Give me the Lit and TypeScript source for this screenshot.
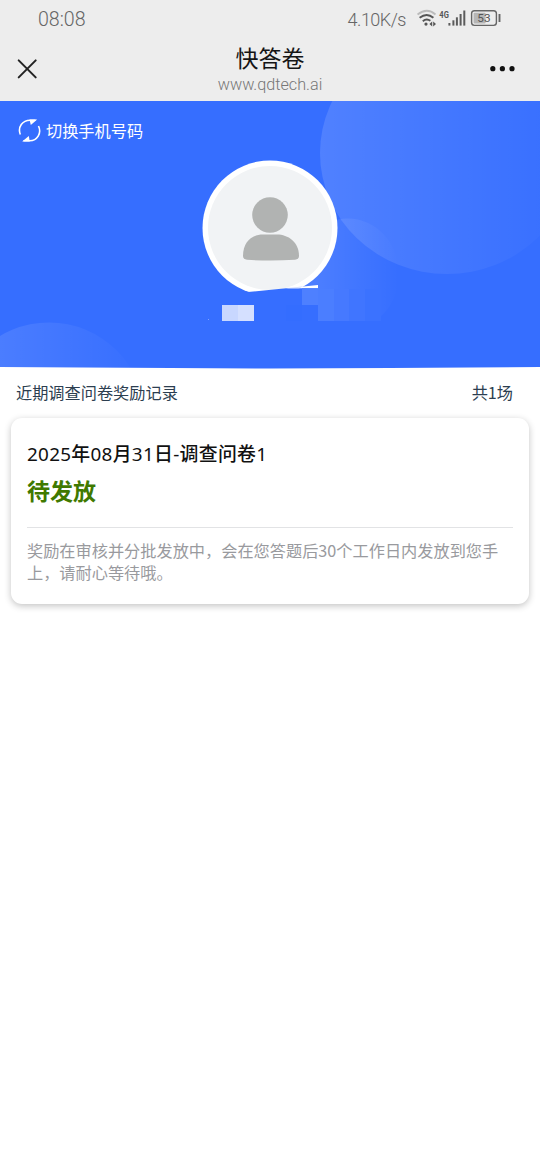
import { LitElement, html, css, svg } from "lit";
import { customElement, property } from "lit/decorators.js";

@customElement("status-bar")
class StatusBar extends LitElement {
  static styles = css`
    :host { display: flex; justify-content: space-between; height: 38px; padding: 0 39px 0 38px; color: #666; font: 300 19.6px/38px Roboto, sans-serif; }
    .clock { padding-top: 1px; }
    .right { display: flex; }
    .speed { font-size: 18px; letter-spacing: -.5px; margin-right: 11px; padding-top: 1px; }
    svg { display: block; }
  `;
  render() {
    const bars = [[448.5, 23], [452.5, 20.3], [456, 17.3], [459.7, 14], [463.4, 10.5]];
    return html`
      <span class="clock">08:08</span>
      <div class="right">
        <span class="speed">4.10K/s</span>
        <svg width="84" height="38" viewBox="417 0 84 38" fill="none">
          <path d="M417.5 14.5Q427 7 435.5 14.5" stroke="#bbb" stroke-width="1.8"/>
          <path d="M419.6 17.8Q426.8 12.2 433.4 17.8M422.8 21.2Q426.5 18 430.4 20.8" stroke="#555" stroke-width="1.9"/>
          <circle cx="426" cy="24.1" r="1.6" fill="#555"/>
          <path d="M429.4 24l2.8-2.5v5zM436 24l-2.8-2.5v5z" fill="#555"/>
          <text x="439.3" y="17.5" font-family="Roboto" font-size="9.5" font-weight="700" textLength="9.5" lengthAdjust="spacingAndGlyphs" fill="#555">4G</text>
          ${bars.map(([x, y]) => svg`<path d="M${x + .9} ${y}V25.6" stroke="#5c5c5c" stroke-width="2"/>`)}
          <rect x="471.6" y="10.8" width="24.8" height="14.6" rx="2.8" stroke="#666" stroke-width="1.4"/>
          <rect x="473.6" y="12.7" width="12" height="10.8" rx="1" fill="#b6b6b6"/>
          <path d="M499.5 14v8" stroke="#666" stroke-width="1.9"/>
          <text x="477.3" y="22.4" font-family="Roboto" font-size="11.8" font-weight="400" fill="#555">53</text>
        </svg>
      </div>`;
  }
}

@customElement("nav-bar")
class NavBar extends LitElement {
  static styles = css`
    :host { display: grid; grid-template-columns: 60px 1fr 60px; height: 63px; }
    .mid { display: flex; flex-direction: column; align-items: center; }
    .title { font: 400 23px/30px "Noto Sans CJK SC", sans-serif; color: #151515; margin-top: 4px; }
    .url { font: 300 16.2px/20px Roboto, sans-serif; color: #777; margin-top: 3px; }
    svg { display: block; }
  `;
  render() {
    return html`
      <svg width="60" height="63" viewBox="0 38 60 63"><path d="M18.7 60.4l17 17M35.7 60.4l-17 17" stroke="#222" stroke-width="2" stroke-linecap="round"/></svg>
      <div class="mid"><div class="title">快答卷</div><div class="url">www.qdtech.ai</div></div>
      <svg width="60" height="63" viewBox="480 38 60 63" fill="#111"><circle cx="492.8" cy="68.7" r="2.6"/><circle cx="502.4" cy="68.7" r="2.6"/><circle cx="512" cy="68.7" r="2.6"/></svg>`;
  }
}

@customElement("profile-hero")
class ProfileHero extends LitElement {
  static styles = css`
    :host { display: grid; height: 268px; }
    .art, .switch { grid-area: 1 / 1; }
    .art { display: block; }
    .switch { display: flex; align-items: center; align-self: start; gap: 5px; padding: 17px 0 0 18px; height: 25px; color: #fff; z-index: 1; font: 400 16.2px/24px "Noto Sans CJK SC", sans-serif; }
    .label { margin-top: -2px; }
  `;
  render() {
    return html`
      <svg class="art" width="540" height="268" viewBox="0 101 540 268">
        <defs>
          <linearGradient id="big"><stop offset="0" stop-color="#fff" stop-opacity=".13"/><stop offset="1" stop-color="#fff" stop-opacity="0"/></linearGradient>
          <linearGradient id="small"><stop offset=".2" stop-color="#fff" stop-opacity=".11"/><stop offset="1" stop-color="#fff" stop-opacity="0"/></linearGradient>
          <clipPath id="edge"><path d="M0 101H540V367Q405 368 270 368.6Q135 368 0 367Z"/></clipPath>
          <clipPath id="above"><rect x="290" y="210" width="120" height="111"/></clipPath>
        </defs>
        <g clip-path="url(#edge)">
          <rect y="101" width="540" height="268" fill="#366eff"/>
          <ellipse cx="447" cy="153" rx="127" ry="121" fill="url(#big)"/>
          <ellipse cx="348" cy="274" rx="51" ry="55.5" fill="url(#small)" clip-path="url(#above)"/>
          <circle cx="49" cy="418.5" r="96" fill="url(#small)"/>
          <circle cx="270" cy="228" r="67.5" fill="#fff"/>
          <circle cx="270" cy="228" r="62" fill="#f1f3f5"/>
          <circle cx="270" cy="215" r="17.8" fill="#b1b3b2"/>
          <path d="M243 256C243 242 252 234.5 263 234.5H277C288 234.5 299 242 299 256Q299 259.2 295 259.8Q270 261.3 247 259.8Q243 259.2 243 256Z" fill="#b1b3b2"/>
          <path d="M202 292H248L286 288.2H318V321H202Z" fill="#366eff"/>
          <path d="M286 288.3L318 285V288.3Z" fill="#fff"/>
          <path d="M286 288.1L303 286.5L300 287.6Z" fill="#b9cbff"/>
          <rect x="302" y="288.3" width="16" height="16.7" fill="#4e80ff"/>
          <rect x="318" y="289" width="16" height="32" fill="#4b7eff"/>
          <rect x="334" y="289" width="15" height="32" fill="#4679ff"/>
          <rect x="349" y="289" width="16" height="32" fill="#4075ff"/>
          <rect x="365" y="289" width="16" height="32" fill="#3b72ff"/>
          <rect x="286" y="305" width="16" height="16" fill="#346dff"/>
          <rect x="222" y="305" width="16" height="16" fill="#c8d7ff"/>
          <rect x="238" y="305" width="16" height="16" fill="#d5e0ff"/>
          <rect x="208" y="319" width="1" height="1" fill="#7ea2ff"/>
        </g>
      </svg>
      <div class="switch">
        <svg width="23" height="25" viewBox="18 118 23 25" fill="none" stroke="#fff" stroke-width="1.6">
          <path d="M20.3 134.5C17.6 127.5 22 119.8 31 120.2H35.5"/>
          <path d="M38.5 126C41.8 133 37.5 141.2 29 140.8H23.5"/>
          <path d="M29.5 119.4H37.2L30.8 125ZM29.8 141.6H22.2L28.8 136Z" fill="#fff" stroke="none"/>
        </svg>
        <span class="label">切换手机号码</span>
      </div>`;
  }
}

@customElement("record-card")
class RecordCard extends LitElement {
  @property() name = "";
  @property() status = "";
  @property() note = "";
  static styles = css`
    :host { display: block; box-sizing: border-box; height: 186px; margin: 0 11px; padding: 22px 16px 0; background: #fff; border-radius: 11px; box-shadow: 0 2px 7px rgba(0,0,0,.24); font-family: "Noto Sans CJK SC", sans-serif; }
    .name { font: 500 18.9px/28px "Noto Sans", "Noto Sans CJK SC", sans-serif; font-weight: 450; letter-spacing: .28px; color: #111; height: 28px; }
    .status { font-size: 23px; line-height: 34px; font-weight: 700; color: #3f7900; margin-top: 5px; height: 34px; }
    .note { border-top: 1px solid #e2e3e5; margin-top: 20px; padding-top: 11px; font-size: 16.22px; line-height: 22px; color: #999a9e; }
  `;
  render() {
    return html`<div class="name">${this.name}</div><div class="status">${this.status}</div><div class="note">${this.note}</div>`;
  }
}

@customElement("app-root")
class AppRoot extends LitElement {
  static styles = css`
    :host { display: block; min-height: 1170px; background: #fff; }
    .top { height: 101px; background: #ededed; }
    .heading { display: flex; justify-content: space-between; height: 49px; padding: 0 27px 0 16px; color: #2c3e50; font: 400 16.2px/46px "Noto Sans CJK SC", sans-serif; }
  `;
  render() {
    return html`
      <div class="top"><status-bar></status-bar><nav-bar></nav-bar></div>
      <profile-hero></profile-hero>
      <div class="heading"><span>近期调查问卷奖励记录</span><span>共1场</span></div>
      <record-card name="2025年08月31日-调查问卷1" status="待发放" note="奖励在审核并分批发放中，会在您答题后30个工作日内发放到您手上，请耐心等待哦。"></record-card>`;
  }
}
